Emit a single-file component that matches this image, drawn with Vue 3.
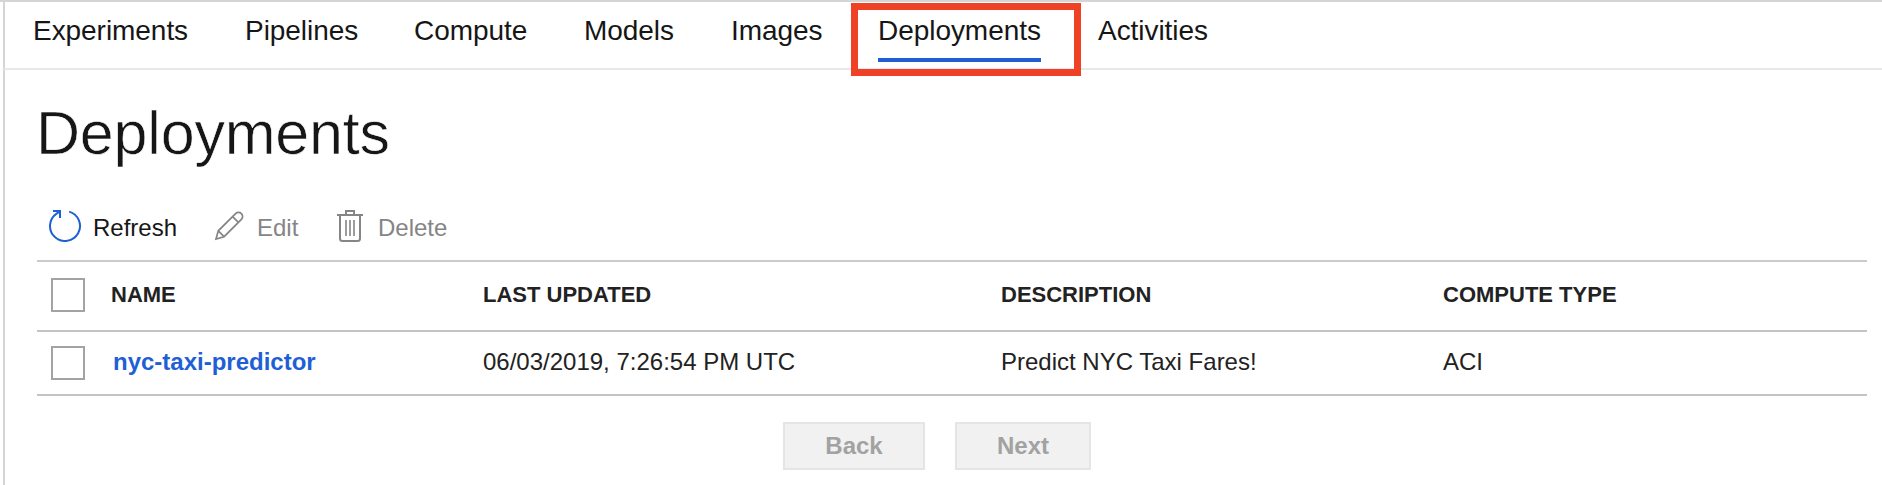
<script setup>
const tabs = ['Experiments', 'Pipelines', 'Compute', 'Models', 'Images', 'Deployments', 'Activities']
const active = 'Deployments'
const rows = [
  { name: 'nyc-taxi-predictor', updated: '06/03/2019, 7:26:54 PM UTC', description: 'Predict NYC Taxi Fares!', compute: 'ACI' },
]
</script>

<template>
  <div class="page">
    <nav class="tabs">
      <a v-for="tab in tabs" :key="tab" class="tab" :class="[tab.toLowerCase(), { active: tab === active }]">
        <span class="label">{{ tab }}</span>
        <span v-if="tab === active" class="highlight"></span>
      </a>
    </nav>
    <main>
      <h1>Deployments</h1>
      <div class="toolbar">
        <button class="tool refresh">
          <svg width="34" height="34" viewBox="0 0 34 34" fill="none" stroke="#1f5fd6" stroke-width="2">
            <path d="M21.2 2.6A15 15 0 1 1 8.6 4.6L12 2.2" />
            <path d="M5 2H12V9" />
          </svg>
          <span>Refresh</span>
        </button>
        <button class="tool edit">
          <svg width="30" height="30" viewBox="0 0 30 30" fill="none" stroke="#858585" stroke-width="1.7">
            <path d="M2 28L4.3 19.8L21.6 2.6A4.1 4.1 0 0 1 27.4 8.4L10.1 25.7ZM4.3 19.8L10.1 25.7M18.6 5.6L24.4 11.4" />
          </svg>
          <span>Edit</span>
        </button>
        <button class="tool delete">
          <svg width="26" height="34" viewBox="0 0 26 34" fill="none" stroke="#858585" stroke-width="2">
            <path d="M0 6H26M9 6V2H17V6M3 6V29.5Q3 32 5.5 32H20.5Q23 32 23 29.5V6" />
            <path d="M9 11V27M13 11V27M17 11V27" stroke-width="1.6" />
          </svg>
          <span>Delete</span>
        </button>
      </div>
      <div class="table">
        <div class="row head">
          <span class="box"></span>
          <span>NAME</span>
          <span>LAST UPDATED</span>
          <span>DESCRIPTION</span>
          <span>COMPUTE TYPE</span>
        </div>
        <div v-for="r in rows" :key="r.name" class="row body">
          <span class="box"></span>
          <a class="name">{{ r.name }}</a>
          <span>{{ r.updated }}</span>
          <span>{{ r.description }}</span>
          <span>{{ r.compute }}</span>
        </div>
      </div>
      <div class="pager">
        <button class="back">Back</button>
        <button class="next">Next</button>
      </div>
    </main>
  </div>
</template>

<style>
body { margin: 0; background: #fff; overflow: hidden; }
</style>

<style scoped>
.page {
  box-sizing: border-box;
  height: 485px;
  border-top: 2px solid #d5d5d5;
  padding-left: 3px;
  font-family: "Liberation Sans", Arial, sans-serif;
  color: #161616;
  display: flex;
  flex-direction: column;
}
.tabs {
  box-sizing: border-box;
  height: 68px;
  border-left: 2px solid #d5d5d5;
  border-bottom: 2px solid #e8e8e8;
  padding: 11px 0 0 28px;
  display: grid;
  grid-template-columns: 212px 169px 170px 147px 147px 220px auto;
  font-size: 28px;
  line-height: 36px;
}
.tab { position: relative; letter-spacing: -0.05px; }
.label { display: inline-block; }
.tab.active .label { height: 45px; border-bottom: 4px solid #1f5fd6; }
.highlight {
  position: absolute;
  left: -27px;
  top: -10px;
  box-sizing: border-box;
  width: 230px;
  height: 73px;
  border: 7px solid #ee4126;
}
main {
  box-sizing: border-box;
  flex: 1;
  border-left: 2px solid #d5d5d5;
  padding: 27px 15px 0 32px;
}
h1 {
  margin: 0 0 0 -1px;
  font-size: 61px;
  line-height: 72px;
  font-weight: 400;
  letter-spacing: -0.2px;
  -webkit-text-stroke: 0.6px #fff;
}
button { font-family: inherit; margin: 0; padding: 0; border: 0; background: none; }
.toolbar { height: 91px; display: flex; }
.tool {
  display: flex;
  align-items: flex-start;
  font-size: 24px;
  line-height: 30px;
  color: #161616;
}
.tool span { margin-top: 44px; }
.refresh { width: 177px; }
.refresh svg { margin: 40px 11px 0 11px; }
.edit { width: 123px; color: #858585; }
.edit svg { margin: 42px 13px 0 0; }
.delete { color: #858585; }
.delete svg { margin: 40px 15px 0 0; }
.table { border-top: 2px solid #cbcbcb; }
.row {
  box-sizing: border-box;
  display: grid;
  grid-template-columns: 74px 372px 518px 442px auto;
  align-items: start;
  border-bottom: 2px solid #c4c4c4;
  font-size: 24px;
  line-height: 30px;
  color: #222;
}
.head { height: 70px; font-size: 22px; font-weight: 700; padding-top: 16px; }
.head > :not(.box) { padding-top: 2px; }
.body { height: 64px; padding-top: 14px; }
.body > :not(.box) { padding-top: 1px; }
.box {
  box-sizing: border-box;
  width: 34px;
  height: 34px;
  margin-left: 14px;
  border: 2px solid #a3a3a3;
}
.name { padding-left: 2px; font-weight: 700; color: #1f5fd6; }
.pager { display: flex; padding: 26px 0 0 746px; gap: 30px; }
.pager button {
  box-sizing: border-box;
  height: 48px;
  border: 2px solid #e5e5e5;
  background: #f1f1f1;
  color: #a2a2a2;
  font-size: 24px;
  font-weight: 700;
  line-height: 30px;
}
.back { width: 142px; }
.next { width: 136px; }
</style>
